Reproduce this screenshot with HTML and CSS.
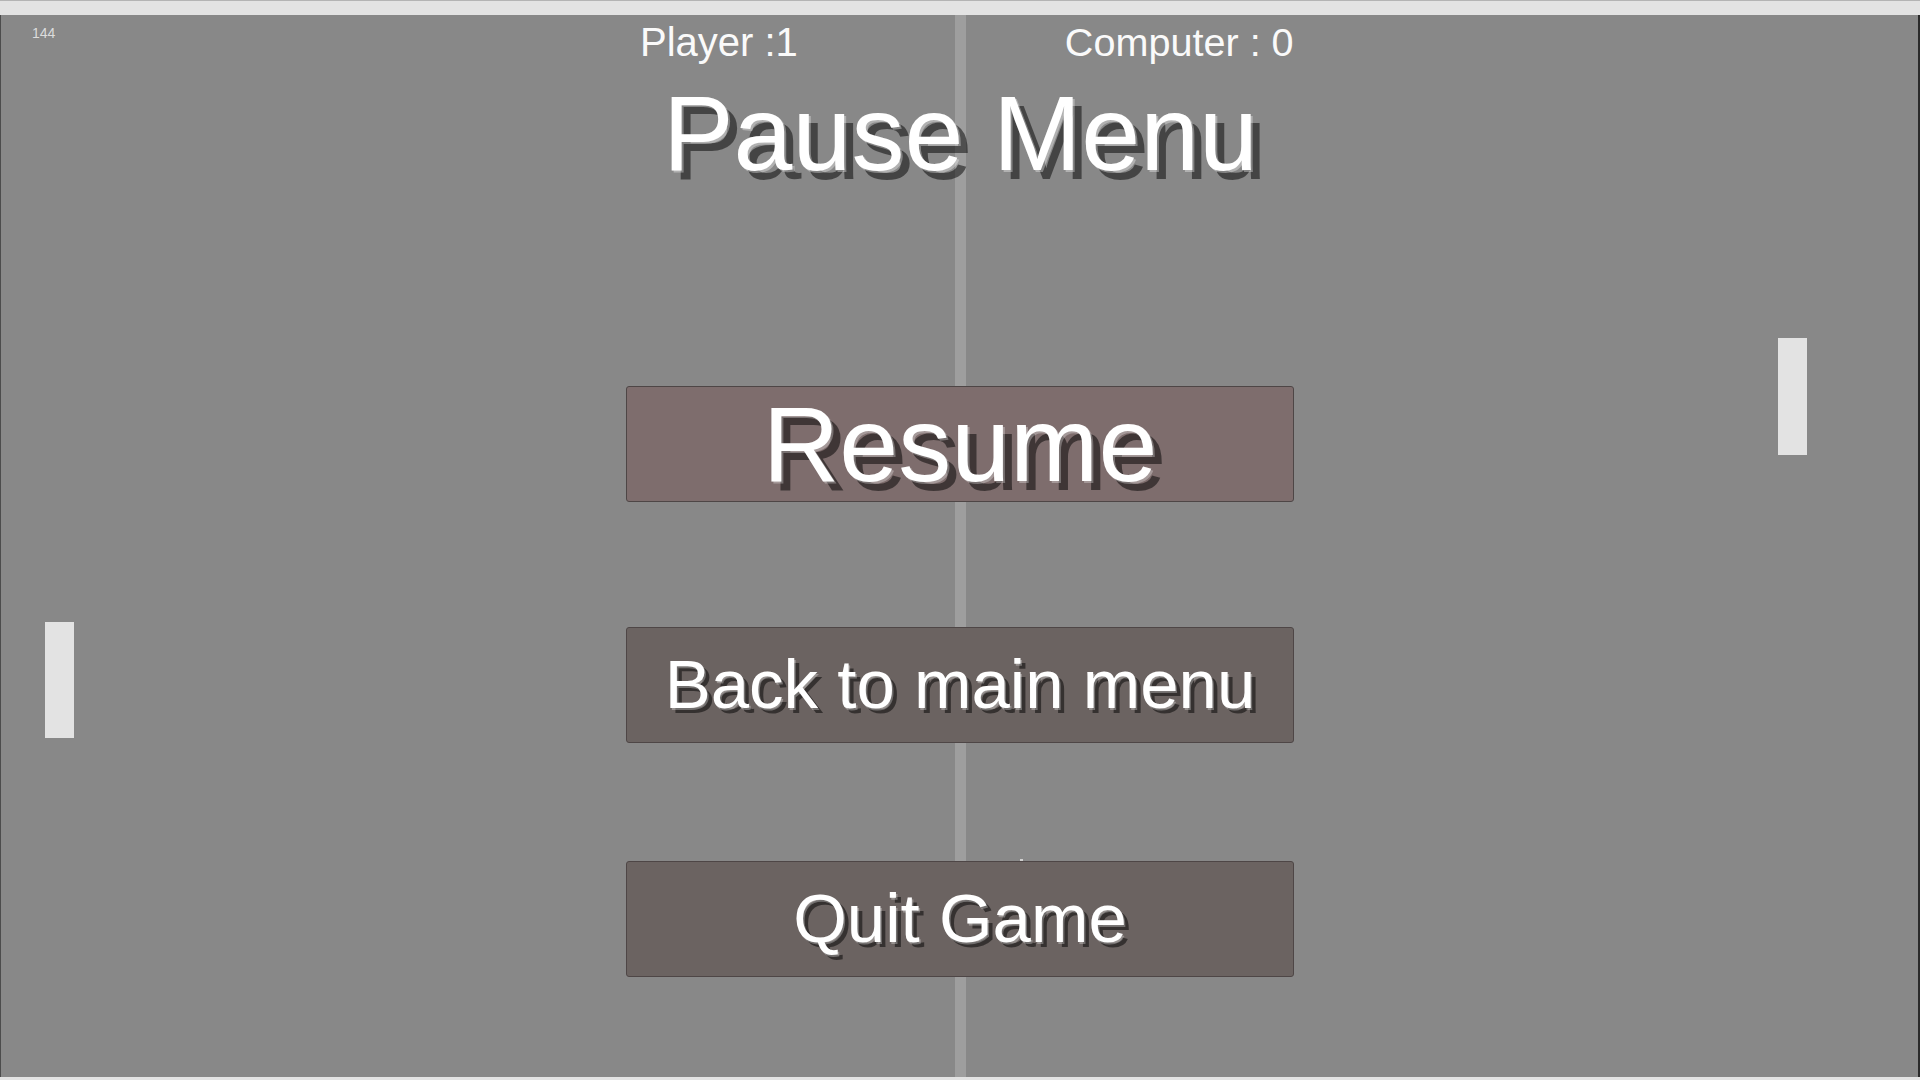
FILE: index.html
```html
<!DOCTYPE html>
<html lang="en">
<head>
<meta charset="utf-8">
<title>Pong - Pause Menu</title>
<link rel="stylesheet" href="styles.css">
</head>
<body>
<div class="window">
  <div class="titlebar"></div>
  <div class="game">
    <div class="net"></div>
    <div class="paddle paddle-left"></div>
    <div class="paddle paddle-right"></div>
    <div class="ball"></div>
    <div class="fps">144</div>

    <div class="overlay">
      <div class="scores">
        <span class="score score-player">Player :1</span>
        <span class="score score-computer">Computer : 0</span>
      </div>
      <h1 class="title">Pause Menu</h1>
      <div class="menu">
        <button class="btn btn-resume">Resume</button>
        <button class="btn btn-back">Back to main menu</button>
        <button class="btn btn-quit">Quit Game</button>
      </div>
    </div>
  </div>
</div>
</body>
</html>
```
FILE: styles.css
```css
* { box-sizing: border-box; }

html, body {
  margin: 0;
  padding: 0;
  width: 1920px;
  height: 1080px;
  overflow: hidden;
  background: #e3e3e3;
  font-family: "Liberation Sans", Arial, sans-serif;
}

.window {
  display: flex;
  flex-direction: column;
  width: 1920px;
  height: 1080px;
}

.titlebar {
  height: 15px;
  flex: none;
  background: #e3e3e3;
  border-top: 1px solid #b4b4b4;
}

.game {
  position: relative;
  flex: none;
  height: 1062px;
  background: #888888;
  border-left: 1px solid #4c4c4c;
  border-right: 2px solid #2a2a2a;
  overflow: hidden;
}

.net {
  position: absolute;
  left: 954px;
  top: 0;
  width: 11px;
  height: 100%;
  background: #9e9e9e;
}

.paddle {
  position: absolute;
  width: 29px;
  height: 116px;
  background: #e3e3e3;
}
.paddle-left { left: 44px; top: 607px; }
.paddle-right { left: 1777px; top: 323px; height: 117px; }

.ball {
  position: absolute;
  left: 1019px;
  top: 844px;
  width: 3px;
  height: 2px;
  background: #d0d0d0;
}

.fps {
  position: absolute;
  left: 31px;
  top: 11px;
  font-size: 14px;
  line-height: 14px;
  color: #dcdcdc;
}

.overlay {
  position: relative;
  display: flex;
  flex-direction: column;
  align-items: center;
}

.scores {
  align-self: stretch;
  display: flex;
  padding-top: 7px;
  padding-left: 639px;
}

.score {
  font-size: 40px;
  line-height: 40px;
  color: #fafafa;
  white-space: pre;
}
.score-computer { margin-left: 267px; font-size: 39.6px; }

.title {
  margin: 18px 0 0 0;
  font-size: 106px;
  line-height: 106px;
  font-weight: normal;
  color: #ffffff;
  text-shadow: 2px 2px 0 rgba(255,255,255,0.35), 9px 9px 0 rgba(0,0,0,0.5);
  white-space: nowrap;
  padding-left: 2px;
}

.menu {
  display: flex;
  flex-direction: column;
  align-items: center;
  margin-top: 200px;
  padding-left: 1px;
}

.btn {
  display: flex;
  align-items: center;
  justify-content: center;
  width: 668px;
  height: 116px;
  padding: 0;
  margin: 0;
  border: 1px solid #4e4646;
  border-radius: 3px;
  background: #6b6361;
  color: #ffffff;
  font-family: "Liberation Sans", Arial, sans-serif;
  font-size: 69px;
  line-height: 70px;
  white-space: nowrap;
  text-shadow: 1.5px 1.5px 0 rgba(255,255,255,0.3), 5px 5px 0 rgba(0,0,0,0.5);
  cursor: pointer;
}

.btn-resume {
  background: #7e6d6d;
  font-size: 106px;
  line-height: 106px;
  text-shadow: 2px 2px 0 rgba(255,255,255,0.3), 9px 9px 0 rgba(0,0,0,0.5);
}

.btn-back { margin-top: 125px; }
.btn-quit { margin-top: 118px; }
```
